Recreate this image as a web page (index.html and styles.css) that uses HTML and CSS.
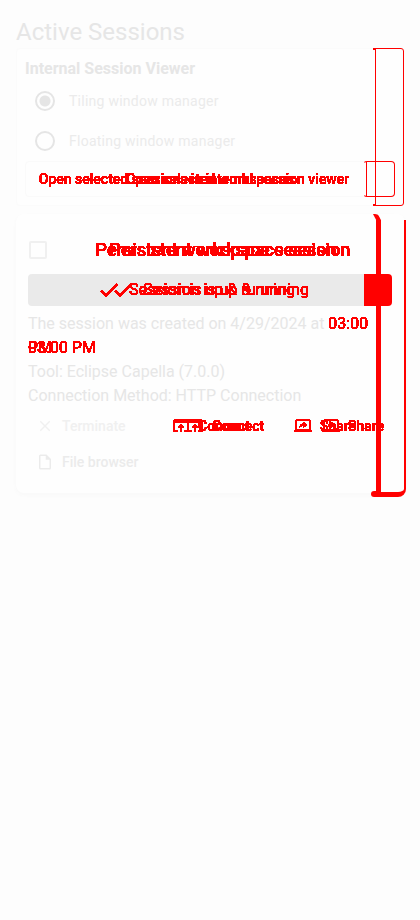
FILE: index.html
```
<!DOCTYPE html>
<html lang="en">
<head>
<meta charset="utf-8">
<meta name="viewport" content="width=device-width, initial-scale=1">
<title>Active Sessions</title>
<link rel="stylesheet" href="styles.css">
</head>
<body>
<svg class="defs" aria-hidden="true">
  <filter id="solid" x="-5%" y="-20%" width="110%" height="140%" color-interpolation-filters="sRGB">
    <feComponentTransfer><feFuncA type="linear" slope="60" intercept="-4"/></feComponentTransfer>
  </filter>
  <symbol id="done" viewBox="0 0 24 24"><path d="M9 16.2 4.8 12l-1.4 1.4L9 19 21 7l-1.4-1.4z"/></symbol>
  <symbol id="connect" viewBox="0 0 24 24"><path d="M20 3H4a2 2 0 0 0-2 2v13a2 2 0 0 0 2 2h4v-2H4V8h16v10h-4v2h4a2 2 0 0 0 2-2V5a2 2 0 0 0-2-2zm-8 7-4 4h3v6h2v-6h3z"/></symbol>
  <symbol id="share" viewBox="0 0 24 24"><path d="M20 18a2 2 0 0 0 2-2V5a2 2 0 0 0-2-2H4a2 2 0 0 0-2 2v11c0 1.100.9 2 2 2H0v2h24v-2zM4 16V5h16v11zm9-7.500V7l4 3.500-4 3.500v-2c-3 0-4.500.8-6 2 .5-2.500 2-5 6-5.500z"/></symbol>
</svg>
<main class="page">
  <h1>Active Sessions</h1>
  <section class="viewer">
    <div class="edge edge-thin"></div>
    <h2>Internal Session Viewer</h2>
    <label class="radio"><input type="radio" name="manager" checked><span>Tiling window manager</span></label>
    <label class="radio"><input type="radio" name="manager"><span>Floating window manager</span></label>
    <button class="open" type="button">
      <span class="edge edge-button"></span>
      <span class="stack changed">
        <span class="before">Open selected sessions in internal session viewer</span>
        <span class="after">Open selected workspaces</span>
      </span>
    </button>
  </section>
  <article class="session">
    <div class="edge edge-thick"></div>
    <div class="head">
      <input type="checkbox" aria-label="Select session">
      <h3 class="stack changed">
        <span class="before">Persistent workspace session</span>
        <span class="after">Persistent workspace session</span>
      </h3>
    </div>
    <div class="status">
      <div class="stack changed">
        <span class="before"><svg><use href="#done"/></svg>Session is up &amp; running</span>
        <span class="after"><svg><use href="#done"/></svg>Session is up &amp; running</span>
      </div>
    </div>
    <div class="stack created">
      <p class="before"><span class="shared">The session was created on 4/29/2024 at</span> <span class="changed">03:00&nbsp;PM</span></p>
      <p class="after"><span class="shared ghost">The session was created on 4/29/2024 at</span> <span class="changed">03:00 PM</span></p>
    </div>
    <p>Tool: Eclipse Capella (7.0.0)</p>
    <p>Connection Method: HTTP Connection</p>
    <div class="actions">
      <button type="button" class="muted"><svg viewBox="0 0 24 24"><path d="M19 6.400 17.600 5 12 10.600 6.400 5 5 6.400l5.600 5.600L5 17.600 6.400 19l5.600-5.600 5.600 5.600 1.400-1.400-5.600-5.600z"/></svg>Terminate</button>
      <button type="button" class="stack changed">
        <span class="first"><svg><use href="#connect"/></svg>Connect</span>
        <span class="second near"><svg><use href="#connect"/></svg>Connect</span>
      </button>
      <button type="button" class="stack changed">
        <span class="first"><svg><use href="#share"/></svg>Share</span>
        <span class="second"><svg><use href="#share"/></svg>Share</span>
      </button>
      <button type="button" class="files"><svg viewBox="0 0 24 24"><path d="M14 2H6a2 2 0 0 0-2 2v16c0 1.100.9 2 2 2h12a2 2 0 0 0 2-2V8zM6 20V4h7v5h5v11z"/></svg>File browser</button>
    </div>
  </article>
</main>
</body>
</html>
```
FILE: styles.css
```
* { box-sizing: border-box; }
body {
  margin: 0;
  min-height: 100vh;
  background: #fdfdfd;
  color: #e6e6e6;
  font: 16px/24px Roboto, sans-serif;
}
h1, h2, h3, p { margin: 0; }
button { font: inherit; color: inherit; border: 0; background: none; padding: 0; }
.defs { position: absolute; width: 0; height: 0; }
.page { padding: 16px 15px 16px 16px; }
h1 { font-size: 24px; line-height: 32px; font-weight: 400; }

.stack { display: grid; }
.stack > * { grid-area: 1 / 1; }
.before { margin-right: 28px; }
.changed { color: #f00; filter: url(#solid); }
.edge { position: absolute; border: 1px solid #f00; pointer-events: none; }

.viewer {
  position: relative;
  border: 1px solid #fbfbfb;
  border-radius: 4px;
  margin-right: 1px;
  padding: 8px;
  background: #fefefe;
}
.edge-thin { top: -1px; right: -1px; bottom: -1px; width: 29px; border-radius: 0 3px 3px 0; }
.edge-thin::before, .edge-thin::after { content: ""; position: absolute; left: -3px; width: 3px; height: 2px; background: #f00; }
.edge-thin::before { top: -1px; }
.edge-thin::after { bottom: -1px; }
h2 { font-size: 16px; line-height: 24px; font-weight: 700; }
.radio { display: flex; align-items: center; gap: 14px; height: 40px; padding-left: 10px; font-size: 14px; letter-spacing: 0.25px; color: #ebebeb; }
.radio input {
  appearance: none;
  width: 20px;
  height: 20px;
  margin: 0;
  border: 2px solid #e5e5e5;
  border-radius: 50%;
}
.radio input:checked { background: radial-gradient(circle, #e5e5e5 5px, transparent 6px); }
.open {
  display: block;
  position: relative;
  width: 100%;
  height: 36px;
  border: 1px solid #fafafa;
  border-radius: 4px;
  font-size: 14px;
  font-weight: 500;
  text-align: center;
  white-space: nowrap;
}
.open .before { margin-right: 32px; }
.edge-button { top: -1px; right: -1px; bottom: -1px; width: 32px; border-left-color: transparent; border-radius: 4px; }
.edge-button::before { content: ""; position: absolute; top: 0; bottom: 0; left: 2px; border-left: 1px solid #f00; }

.session {
  position: relative;
  margin-top: 8px;
  padding: 12px 13px 13px 12px;
  border-radius: 8px;
  background: #fefefe;
  box-shadow: 0 2px 4px #f8f8f8;
}
.edge-thick {
  top: 6px;
  right: -1px;
  bottom: -4px;
  width: 30px;
  border-width: 0 2px 5px 5px;
  border-radius: 0 0 8px 0;
}
.edge-thick::before, .edge-thick::after { content: ""; position: absolute; background: #f00; }
.edge-thick::before { left: -8px; top: -6px; width: 8px; height: 6px; border-radius: 0 8px 0 0; clip-path: polygon(0 0, 60% 0, 100% 100%, 40% 100%); }
.edge-thick::after { left: -10px; bottom: -5px; width: 6px; height: 6px; border-radius: 3px 0 0 3px; }
.head { display: grid; height: 48px; align-items: center; }
.head > * { grid-area: 1 / 1; }
.head input { appearance: none; width: 18px; height: 18px; margin: 0 0 0 1px; border: 2px solid #f0f0f0; border-radius: 2px; }
h3 { padding-left: 40px; font-size: 18px; line-height: 24px; font-weight: 500; text-align: center; }
.status { border-radius: 4px; background: linear-gradient(to left, #f00 28px, #eaeaea 28px); }
.status span { display: flex; align-items: center; justify-content: center; gap: 8px; height: 32px; }
.status svg { width: 24px; height: 24px; }
svg { flex: none; fill: currentColor; }
.created { margin-top: 6px; }
.ghost { visibility: hidden; }
.actions {
  display: grid;
  grid-template-columns: 144px 122px 1fr;
  font-size: 14px;
  font-weight: 500;
}
.actions button { display: flex; align-items: center; gap: 8px; height: 36px; padding-left: 8px; }
.actions button.stack { display: grid; padding-left: 0; justify-content: start; }
.actions span { display: flex; align-items: center; gap: 8px; }
.actions svg { width: 18px; height: 18px; }
.actions .second { margin-left: 28px; }
.actions .near { margin-left: 14px; }
.actions .muted { color: #f0f0f0; white-space: nowrap; }
.actions .files { color: #ebebeb; white-space: nowrap; }
```
